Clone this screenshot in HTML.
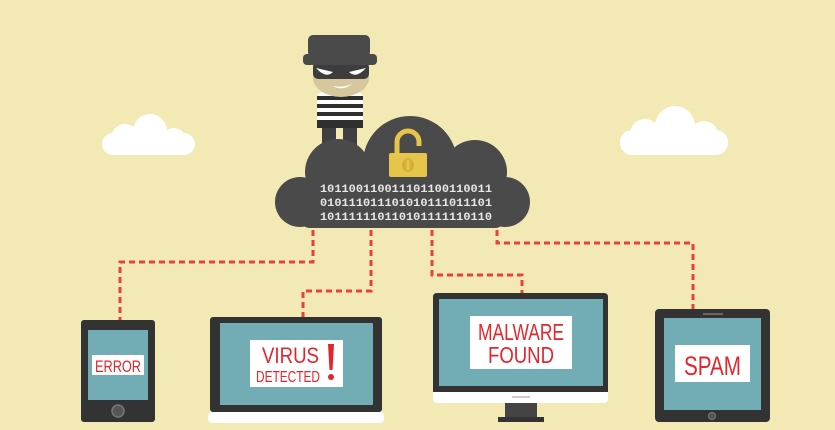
<!DOCTYPE html>
<html><head><meta charset="utf-8"><style>
html,body{margin:0;padding:0;background:#f3e9b5;}
svg{display:block}
.t{font-family:"Liberation Sans",sans-serif;fill:#e2262d;}
.b{font-family:"Liberation Mono",monospace;font-size:11px;font-weight:bold;fill:#e6e6e6;}
</style></head><body>
<svg width="835" height="430" viewBox="0 0 835 430" xmlns="http://www.w3.org/2000/svg">
<rect width="835" height="430" fill="#f3e9b5"/>
<g fill="#ffffff">
<rect x="102" y="133" width="93" height="22" rx="11"/>
<circle cx="125" cy="138" r="14"/><circle cx="150" cy="131" r="17"/><circle cx="174" cy="140" r="12"/>
<rect x="620" y="130" width="108" height="25" rx="12"/>
<circle cx="645" cy="134" r="15"/><circle cx="675" cy="126" r="20"/><circle cx="704" cy="135" r="14"/>
</g>
<g fill="none" stroke="#e8413c" stroke-width="3" stroke-dasharray="6 4">
<path d="M313 230 V262 H120 V320"/>
<path d="M371 230 V291 H303 V318"/>
<path d="M432 230 V275 H522 V293"/>
<path d="M497 230 V243 H693 V309"/>
</g>
<g>
<rect x="322" y="118" width="14" height="28" fill="#3f3f3f"/>
<rect x="343" y="118" width="14" height="28" fill="#3f3f3f"/>
<rect x="317" y="92" width="46" height="36" rx="6" fill="#ffffff"/>
<g fill="#2f2f2f"><rect x="317" y="96" width="46" height="4"/><rect x="317" y="104" width="46" height="4"/><rect x="317" y="112" width="46" height="4"/><rect x="317" y="120" width="46" height="8"/></g>
<ellipse cx="341" cy="78" rx="28" ry="19" fill="#d6c89c"/>
<rect x="313" y="62" width="56" height="17" rx="5" fill="#3d3d3d"/>
<path d="M316 68 L333 72 Q326 79 316 68Z" fill="#fff"/>
<path d="M366 68 L349 72 Q356 79 366 68Z" fill="#fff"/>
<path d="M333 86 Q343 92 353 83 Q346 88 333 86Z" fill="#fff"/>
<rect x="303" y="54" width="74" height="11" rx="4" fill="#4a4a4a"/>
<rect x="308" y="35" width="62" height="22" rx="5" fill="#4a4a4a"/>
</g>
<g fill="#4a4a4a">
<rect x="300" y="177" width="205" height="51" rx="10"/>
<circle cx="338" cy="172" r="33"/><circle cx="410" cy="163" r="47"/><circle cx="475" cy="172" r="32"/>
<circle cx="300" cy="202" r="25"/><circle cx="505" cy="202" r="25"/>
</g>
<path d="M397 154 V142 A11 11 0 0 1 419 142 V146" fill="none" stroke="#e6c54b" stroke-width="5"/>
<rect x="389" y="153" width="38" height="24" rx="2" fill="#e6c54b"/>
<ellipse cx="408" cy="165" rx="6" ry="7" fill="#d4b03a"/>
<rect x="406.5" y="160" width="3" height="10" fill="#e6c54b"/>
<text class="b" x="320" y="192" textLength="172" lengthAdjust="spacingAndGlyphs">101100110011101100110011</text>
<text class="b" x="320" y="206" textLength="172" lengthAdjust="spacingAndGlyphs">010111011101010111011101</text>
<text class="b" x="320" y="220" textLength="172" lengthAdjust="spacingAndGlyphs">101111110110101111110110</text>
<rect x="81" y="320" width="74" height="102" rx="3" fill="#333"/>
<rect x="88" y="330" width="60" height="70" fill="#72adb5"/>
<circle cx="118" cy="411" r="6" fill="#555" stroke="#777" stroke-width="1.5"/>
<rect x="92" y="355" width="52" height="20" fill="#fff"/>
<text class="t" x="95" y="372" font-size="17" textLength="46" lengthAdjust="spacingAndGlyphs">ERROR</text>
<rect x="210" y="317" width="172" height="95" rx="3" fill="#333"/>
<rect x="220" y="323" width="153" height="82" fill="#72adb5"/>
<rect x="208" y="412" width="176" height="11" rx="4" fill="#fff"/>
<rect x="250" y="340" width="93" height="47" fill="#fff"/>
<text class="t" x="262" y="363" font-size="22" textLength="57" lengthAdjust="spacingAndGlyphs">VIRUS</text>
<text class="t" x="256" y="382" font-size="16" textLength="64" lengthAdjust="spacingAndGlyphs">DETECTED</text>
<path d="M328 344 L334 344 L332.5 370 L329.5 370Z" fill="#e2262d"/><circle cx="331" cy="377" r="3" fill="#e2262d"/>
<rect x="505" y="400" width="32" height="18" fill="#444"/>
<rect x="498" y="417" width="46" height="5" fill="#333"/>
<rect x="433" y="293" width="175" height="110" rx="4" fill="#fff"/>
<path d="M433 297 Q433 293 437 293 H604 Q608 293 608 297 V392 H433Z" fill="#333"/>
<rect x="439" y="299" width="164" height="87" fill="#72adb5"/>
<rect x="512" y="396" width="18" height="2" fill="#ccc"/>
<rect x="470" y="316" width="102" height="53" fill="#fff"/>
<text class="t" x="478" y="340" font-size="23" textLength="86" lengthAdjust="spacingAndGlyphs">MALWARE</text>
<text class="t" x="488" y="363" font-size="23" textLength="66" lengthAdjust="spacingAndGlyphs">FOUND</text>
<rect x="655" y="309" width="115" height="113" rx="4" fill="#333"/>
<rect x="664" y="318" width="97" height="92" fill="#72adb5"/>
<rect x="703" y="313" width="20" height="2" fill="#666"/>
<circle cx="712" cy="416" r="3.5" fill="#555" stroke="#777"/>
<rect x="675" y="345" width="75" height="37" fill="#fff"/>
<text class="t" x="684" y="375" font-size="27" textLength="57" lengthAdjust="spacingAndGlyphs">SPAM</text>
</svg>
</body></html>
